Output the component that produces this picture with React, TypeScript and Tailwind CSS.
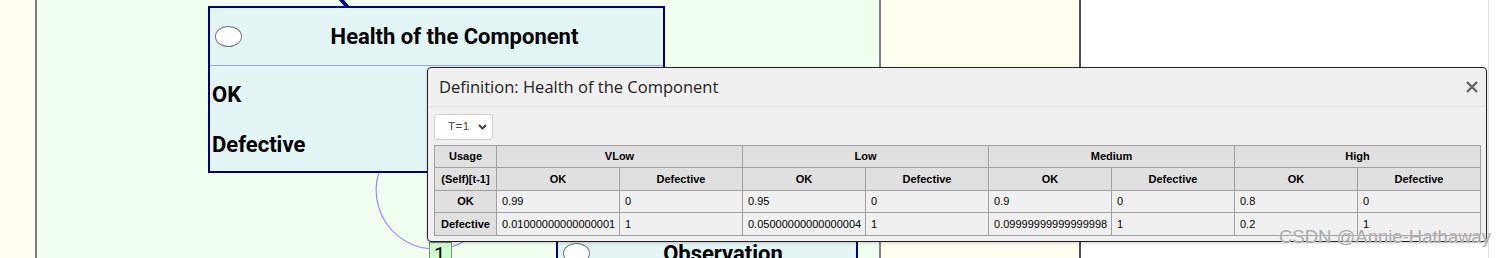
import React from "react";

const groups = ["VLow", "Low", "Medium", "High"];
const rows: { label: string; vals: string[] }[] = [
  { label: "OK", vals: ["0.99", "0", "0.95", "0", "0.9", "0", "0.8", "0"] },
  {
    label: "Defective",
    vals: [
      "0.01000000000000001",
      "1",
      "0.05000000000000004",
      "1",
      "0.09999999999999998",
      "1",
      "0.2",
      "1",
    ],
  },
];

function Ellipse() {
  return <div className="w-[27px] h-[21px] shrink-0 rounded-[50%] bg-white border border-[#777]" />;
}

export default function App() {
  const th = "border border-[#a0a0a0] bg-[#e0e0e0] font-bold text-center text-[11px] text-black p-0";
  const td = "border border-[#a0a0a0] text-left pl-[5px] text-[11px] text-black p-0";
  return (
    <div className="relative w-[1506px] h-[258px] overflow-hidden font-['Roboto',sans-serif]">
      {/* background lanes */}
      <div className="flex h-full">
        <div className="w-[35px] bg-[#fffff0]" />
        <div className="w-[2px] bg-[#808080]" />
        <div className="w-[842px] bg-[#f0fff0]" />
        <div className="w-[2px] bg-[#808080]" />
        <div className="w-[198px] bg-[#fffff0]" />
        <div className="w-[2px] bg-[#505050]" />
        <div className="w-[407px] bg-white" />
        <div className="w-[1px] bg-[#e2e2e2]" />
        <div className="flex-1 bg-white" />
      </div>

      {/* arcs */}
      <svg className="absolute left-0 top-0" width="1506" height="258">
        <path d="M 379 172 A 59 59 0 0 0 465 241" fill="none" stroke="#8c8cff" strokeWidth="1.2" />
        <line x1="340" y1="0" x2="349" y2="7" stroke="#000080" strokeWidth="2" />
        <polygon points="339,0 344,0 350,7 345,7" fill="#000080" />
      </svg>

      {/* Health node */}
      <div className="absolute left-[208px] top-[6px] w-[457px] h-[167px] border-2 border-[#000080] bg-[#e3f5f5] flex flex-col">
        <div className="h-[58px] flex items-center border-b border-[#9aa6d8]">
          <div className="ml-[5px]">
            <Ellipse />
          </div>
          <div className="flex-1 text-center pl-[4px] text-[22px] font-bold text-black">Health of the Component</div>
        </div>
        <div className="pt-[3px]">
          <div className="h-[50px] flex items-center pl-[2px] text-[22px] font-bold text-black">OK</div>
          <div className="h-[50px] flex items-center pl-[2px] text-[22px] font-bold text-black">Defective</div>
        </div>
      </div>

      {/* Observation node */}
      <div className="absolute left-[556px] top-[222px] w-[302px] h-[80px] border-2 border-[#000080] bg-[#e3f5f5]">
        <div className="h-[58px] flex items-center">
          <div className="ml-[5px]">
            <Ellipse />
          </div>
          <div className="flex-1 text-center text-[22px] font-bold text-black">Observation</div>
        </div>
      </div>

      {/* temporal label */}
      <div className="absolute left-[429px] top-[242px] w-[23px] h-[24px] bg-[#ccffcc] border border-[#888] pl-[4px] text-[20px] leading-[24px] text-black">
        1
      </div>

      {/* Dialog */}
      <div className="absolute left-[427px] top-[67px] w-[1060px] h-[175px] border border-[#222] rounded-[4px] bg-[#f0f0f0] shadow-[0_1px_3px_rgba(0,0,0,0.2)]">
        <div className="h-[39px] flex items-center justify-between pl-[11px] pr-[8px] border-b border-[#e4e4e4]">
          <span className="font-['Open_Sans',sans-serif] text-[16.5px] text-[#222]">Definition: Health of the Component</span>
          <svg width="12" height="12" viewBox="0 0 12 12">
            <path d="M1 1 L11 11 M11 1 L1 11" stroke="#666" strokeWidth="2.4" strokeLinecap="butt" />
          </svg>
        </div>
        <div className="pt-[7px] px-[6px] font-['Liberation_Sans',Arial,sans-serif]">
          <div className="w-[59px] h-[26px] bg-white border border-[#d0d0d0] rounded-[3px] flex items-center justify-between pl-[13px] pr-[5px]">
            <span className="text-[11.5px] text-[#444] tracking-[0.5px]">T=1</span>
            <svg width="9" height="6" viewBox="0 0 9 6">
              <path d="M1 1 L4.5 4.5 L8 1" stroke="#444" strokeWidth="2" fill="none" />
            </svg>
          </div>
          <table className="mt-[5px] w-[1046px] border-collapse table-fixed">
            <colgroup>
              <col className="w-[62px]" />
              {Array.from({ length: 8 }).map((_, i) => (
                <col key={i} className="w-[123px]" />
              ))}
            </colgroup>
            <tbody>
              <tr className="h-[22px]">
                <td className={th}>Usage</td>
                {groups.map((g) => (
                  <td key={g} colSpan={2} className={th}>
                    {g}
                  </td>
                ))}
              </tr>
              <tr className="h-[23px]">
                <td className={th}>(Self)[t-1]</td>
                {groups.map((g) => (
                  <React.Fragment key={g}>
                    <td className={th}>OK</td>
                    <td className={th}>Defective</td>
                  </React.Fragment>
                ))}
              </tr>
              {rows.map((r, ri) => (
                <tr key={r.label} className={ri === 0 ? "h-[22px]" : "h-[23px]"}>
                  <td className={th}>{r.label}</td>
                  {r.vals.map((v, i) => (
                    <td key={i} className={td}>
                      {v}
                    </td>
                  ))}
                </tr>
              ))}
            </tbody>
          </table>
        </div>
      </div>

      {/* watermark */}
      <div className="absolute left-[1279px] top-[228px] leading-none text-[18.5px] font-['Liberation_Sans',Arial,sans-serif] text-[#a8a8a8] [text-shadow:0_0_1px_#ffffff]">
        CSDN @Annie-Hathaway
      </div>
    </div>
  );
}
